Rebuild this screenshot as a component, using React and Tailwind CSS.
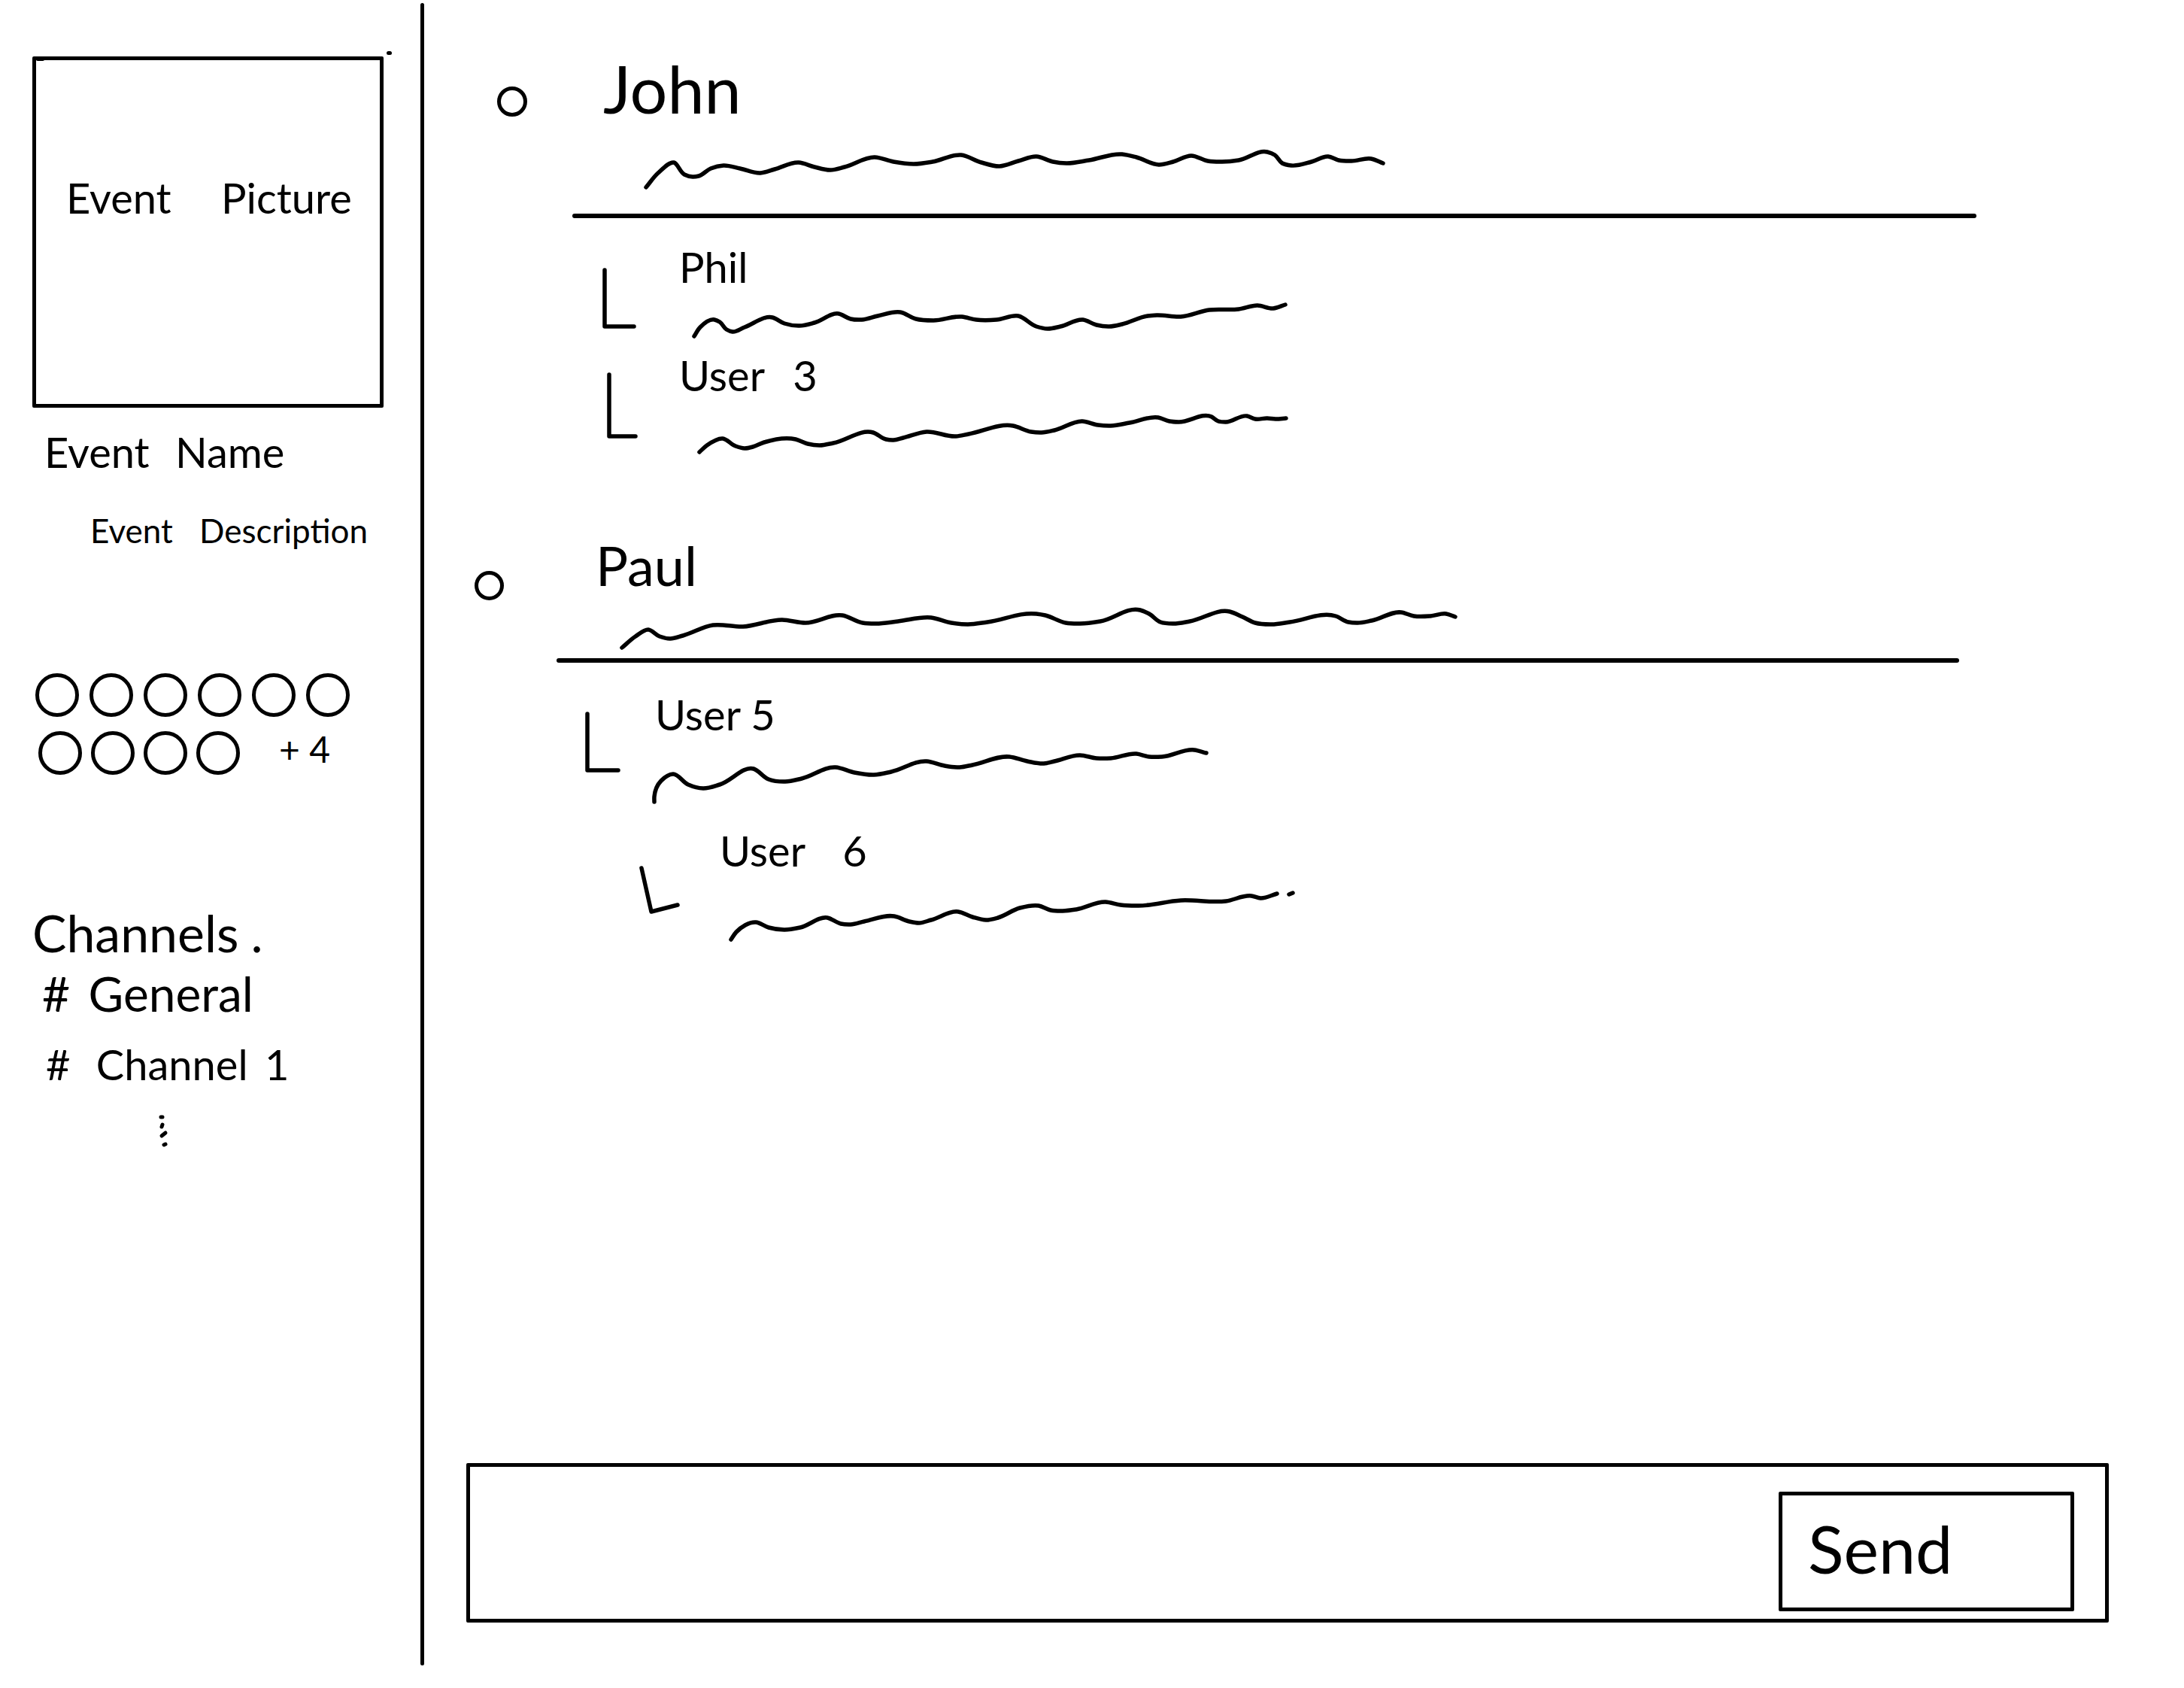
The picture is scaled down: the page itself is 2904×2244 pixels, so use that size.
// Draws a smooth hand-drawn stroke through a list of x,y pairs. Tangents are
// weighted by chord length so unevenly spaced points do not make kinks.
function smoothPath(values) {
  const pts = [];
  for (let i = 0; i < values.length; i += 2) pts.push([values[i], values[i + 1]]);
  const last = pts.length - 1;
  const dist = (a, b) => Math.hypot(b[0] - a[0], b[1] - a[1]) || 1;
  const tangent = (i, axis) => {
    if (i === 0) return (pts[1][axis] - pts[0][axis]) / dist(pts[0], pts[1]);
    if (i === last) return (pts[last][axis] - pts[last - 1][axis]) / dist(pts[last - 1], pts[last]);
    const before = dist(pts[i - 1], pts[i]);
    const after = dist(pts[i], pts[i + 1]);
    const s1 = (pts[i][axis] - pts[i - 1][axis]) / before;
    const s2 = (pts[i + 1][axis] - pts[i][axis]) / after;
    return (s1 * after + s2 * before) / (before + after);
  };
  let d = `M${pts[0][0]} ${pts[0][1]}`;
  for (let i = 0; i < last; i++) {
    const k = dist(pts[i], pts[i + 1]) / 3;
    const [a, b] = [pts[i], pts[i + 1]];
    d += `C${a[0] + tangent(i, 0) * k} ${a[1] + tangent(i, 1) * k} ${b[0] - tangent(i + 1, 0) * k} ${b[1] - tangent(i + 1, 1) * k} ${b[0]} ${b[1]}`;
  }
  return d;
}

function Scribble({ box, points, extra = "", className = "" }) {
  const [, , width, height] = box;
  return (
    <svg
      role="img"
      aria-label="Message text"
      width={width}
      height={height}
      viewBox={box.join(" ")}
      className={`block shrink-0 overflow-visible ${className}`}
      fill="none"
      stroke="black"
      strokeWidth="5.5"
      strokeLinecap="round"
      strokeLinejoin="round"
    >
      <path d={smoothPath(points) + extra} />
    </svg>
  );
}

function Elbow({ width, height, d, className = "" }) {
  return (
    <svg
      aria-hidden="true"
      width={width}
      height={height}
      viewBox={`0 0 ${width} ${height}`}
      className={`block shrink-0 ${className}`}
      fill="none"
      stroke="black"
      strokeWidth="5.5"
      strokeLinecap="round"
      strokeLinejoin="round"
    >
      <path d={d} />
    </svg>
  );
}

const john = [
  859, 249, 875, 230, 896, 216, 910, 232, 921, 235, 929, 234, 945, 224, 962, 220, 984, 224, 1011, 230, 1030, 225,
  1062, 216, 1083, 222, 1104, 226, 1123, 222, 1163, 209, 1188, 215, 1215, 218, 1240, 215, 1278, 206, 1305, 216,
  1329, 221, 1354, 214, 1378, 208, 1400, 215, 1418, 217, 1448, 213, 1492, 205, 1511, 209, 1541, 219, 1560, 215,
  1584, 207, 1606, 214, 1625, 215, 1647, 213, 1685, 202, 1695, 206, 1705, 217, 1717, 220, 1744, 215, 1766, 208,
  1780, 213, 1797, 214, 1823, 211, 1839, 217,
];
const phil = [
  923, 447, 931, 435, 950, 425, 957, 428, 966, 438, 974, 441, 990, 435, 1027, 422, 1043, 430, 1063, 433, 1083, 429,
  1115, 417, 1131, 424, 1146, 425, 1167, 420, 1197, 415, 1218, 424, 1241, 426, 1279, 421, 1298, 425, 1325, 425,
  1354, 420, 1378, 434, 1393, 437, 1410, 434, 1440, 425, 1458, 432, 1475, 434, 1492, 431, 1526, 420, 1538, 419,
  1570, 421, 1608, 412, 1647, 411, 1672, 406, 1693, 410, 1709, 405,
];
const user3 = [
  930, 601, 940, 592, 961, 583, 978, 593, 990, 596, 1001, 594, 1016, 588, 1058, 584, 1074, 590, 1090, 592, 1108, 589,
  1161, 575, 1178, 584, 1188, 585, 1201, 582, 1232, 574, 1271, 580, 1288, 577, 1347, 566, 1371, 574, 1385, 575,
  1402, 572, 1439, 560, 1460, 565, 1477, 566, 1502, 562, 1540, 555, 1555, 560, 1567, 561, 1611, 554, 1620, 560,
  1630, 561, 1658, 553, 1669, 557, 1685, 556, 1696, 557, 1710, 556,
];
const paul = [
  827, 861, 845, 846, 862, 837, 877, 846, 891, 849, 908, 845, 948, 831, 988, 833, 1040, 824, 1071, 828, 1120, 818,
  1147, 828, 1165, 829, 1194, 826, 1238, 821, 1265, 828, 1287, 830, 1313, 827, 1378, 816, 1390, 818, 1417, 828,
  1436, 829, 1463, 826, 1516, 811, 1528, 816, 1543, 827, 1560, 829, 1582, 826, 1635, 813, 1652, 820, 1669, 828,
  1691, 830, 1715, 827, 1776, 819, 1793, 827, 1805, 828, 1824, 825, 1863, 814, 1880, 819, 1902, 819, 1923, 816,
  1935, 820,
];
const user5 = [
  870, 1066, 870, 1059, 879, 1038, 895, 1029, 915, 1043, 935, 1048, 957, 1043, 1002, 1022, 1022, 1036, 1044, 1039,
  1066, 1035, 1111, 1020, 1136, 1027, 1162, 1030, 1185, 1026, 1232, 1012, 1256, 1018, 1276, 1020, 1293, 1017,
  1342, 1006, 1366, 1012, 1388, 1015, 1402, 1012, 1436, 1004, 1458, 1008, 1477, 1008, 1511, 1002, 1528, 1006,
  1545, 1006, 1588, 997, 1604, 1001,
];
const user6 = [
  972, 1249, 979, 1239, 1005, 1226, 1022, 1233, 1043, 1236, 1064, 1233, 1100, 1220, 1118, 1228, 1131, 1229,
  1149, 1225, 1189, 1218, 1209, 1225, 1222, 1227, 1238, 1223, 1274, 1212, 1293, 1219, 1311, 1223, 1327, 1220,
  1356, 1207, 1381, 1204, 1397, 1210, 1413, 1211, 1431, 1209, 1470, 1199, 1490, 1203, 1514, 1204, 1570, 1197,
  1630, 1198, 1664, 1191, 1676, 1194, 1698, 1188,
];

function Ring() {
  return <span className="size-[58px] shrink-0 rounded-full border-5 border-black" />;
}

function Sidebar() {
  return (
    <aside className="w-[559px] shrink-0 pl-[43px] pt-[75px]">
      <div className="relative size-[467px] rounded-xs border-5 border-black pl-10 pt-[155px]">
        <p className="whitespace-nowrap text-[56px] leading-none">
          Event <span className="ml-13">Picture</span>
        </p>
        <span className="absolute -right-[16px] -top-[12px] h-[5px] w-[7px] rounded-full bg-black" />
        <span className="absolute left-0 -top-[3px] h-[4px] w-[11px] rounded-full bg-black" />
      </div>

      <h1 className="mt-[31px] whitespace-nowrap pl-4 text-[56px] leading-none">
        Event <span className="ml-5">Name</span>
      </h1>
      <p className="mt-[54px] whitespace-nowrap pl-[77px] text-[44px] leading-none">
        Event <span className="ml-6">Description</span>
      </p>

      <div className="mt-[168px] flex gap-[14px] pl-1">
        <Ring />
        <Ring />
        <Ring />
        <Ring />
        <Ring />
        <Ring />
      </div>
      <div className="mt-[19px] flex gap-3 pl-2">
        <Ring />
        <Ring />
        <Ring />
        <Ring />
        <span className="pl-10 text-[48px] leading-none">+ 4</span>
      </div>

      <nav aria-labelledby="channels">
        <h2 id="channels" className="mt-[176px] text-[68px] leading-none">
          Channels<span className="ml-4">.</span>
        </h2>
        <ul>
          <li className="mt-[15px] pl-[13px] text-[64px] leading-none">
            <a href="#general">
              # <span className="ml-2">General</span>
            </a>
          </li>
          <li className="mt-[34px] pl-[18px] text-[56px] leading-none">
            <a href="#channel-1">
              # <span className="ml-5">Channel</span> <span className="ml-2">1</span>
            </a>
          </li>
        </ul>
        <svg
          role="img"
          aria-label="More channels"
          width="16"
          height="48"
          viewBox="0 0 16 48"
          className="ml-[167px] mt-[37px] block"
          stroke="black"
          strokeWidth="5"
          strokeLinecap="round"
          fill="none"
        >
          <path d="M4 5h2M5 18l1-3M5 30l5-4M8 42l2-1" />
        </svg>
      </nav>
    </aside>
  );
}

function Thread() {
  return (
    <>
      <article className="pt-[73px]">
        <header className="flex">
          <span className="ml-[97px] mt-[42px] size-[40px] shrink-0 rounded-full border-5 border-black" />
          <h3 className="ml-[101px] text-[88px] leading-none">John</h3>
        </header>
        <Scribble className="ml-[286px] mt-[34px]" box={[850, 195, 1000, 64]} points={john} />
        <hr className="ml-[197px] mr-[276px] mt-[25px] h-[6px] rounded-full border-0 bg-black" />

        <div className="mt-[37px] flex">
          <Elbow className="ml-[236px] mt-[26px]" width={50} height={85} d="M4 6V81H43" />
          <div className="ml-[49px]">
            <h4 className="pl-1 text-[56px] leading-none">Phil</h4>
            <Scribble className="mt-[7px]" box={[899, 390, 830, 65]} points={phil} />
          </div>
        </div>

        <div className="mt-4 flex">
          <Elbow className="ml-[242px] mt-[21px]" width={45} height={92} d="M4 6V88H39" />
          <div className="ml-[48px]">
            <h4 className="pl-1 text-[56px] leading-none">
              User <span className="ml-6">3</span>
            </h4>
            <Scribble className="mt-[18px]" box={[899, 545, 830, 65]} points={user3} />
          </div>
        </div>
      </article>

      <article className="mt-[105px]">
        <header className="flex">
          <span className="ml-[67px] mt-[44px] size-[39px] shrink-0 rounded-full border-5 border-black" />
          <h3 className="ml-[122px] text-[72px] leading-none">Paul</h3>
        </header>
        <Scribble className="ml-[256px] mt-[2px]" box={[820, 800, 1130, 70]} points={paul} />
        <hr className="ml-[176px] mr-[299px] mt-[5px] h-[6px] rounded-full border-0 bg-black" />

        <div className="mt-[41px] flex">
          <Elbow className="ml-[213px] mt-[23px]" width={50} height={84} d="M4 4V79H45" />
          <div className="ml-10">
            <h4 className="pl-1 text-[56px] leading-none">User 5</h4>
            <Scribble className="mt-3" box={[867, 990, 750, 85]} points={user5} />
          </div>
        </div>

        <div className="mt-7 flex">
          <Elbow className="ml-[284px] mt-[46px]" width={58} height={69} d="M5 5L18 63L53 54" />
          <div className="ml-[47px]">
            <h4 className="pl-1 text-[56px] leading-none">
              User <span className="ml-9">6</span>
            </h4>
            <Scribble className="mt-[21px]" box={[953, 1180, 780, 75]} points={user6} extra="M1714 1189L1719 1187" />
          </div>
        </div>
      </article>
    </>
  );
}

export default function App() {
  return (
    <div className="flex min-h-screen bg-white font-['Lato',sans-serif] text-black">
      <Sidebar />
      <div className="mb-[30px] mt-[4px] w-[5px] shrink-0 rounded-full bg-black" />
      <main className="flex min-w-0 flex-1 flex-col">
        <Thread />
        <form
          className="mb-[87px] ml-14 mr-[100px] mt-auto flex rounded-xs border-5 border-black pb-[10px] pr-[41px] pt-[33px]"
          onSubmit={(e) => e.preventDefault()}
        >
          <input type="text" aria-label="Message" className="min-w-0 flex-1 px-8 text-[56px] outline-none" />
          <button
            type="submit"
            className="flex h-[159px] w-[393px] rounded-xs border-5 border-black pl-[34px] pt-[26px] text-[88px] leading-none"
          >
            Send
          </button>
        </form>
      </main>
    </div>
  );
}
